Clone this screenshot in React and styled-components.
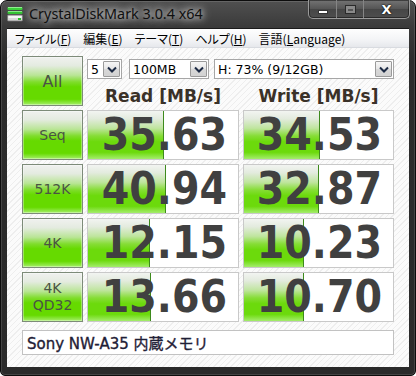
import React from 'react';
import styled, { createGlobalStyle } from 'styled-components';

const Global = createGlobalStyle`
  html, body { margin: 0; padding: 0; background: #ffffff; }
  body { width: 416px; height: 376px; overflow: hidden; }
  * { box-sizing: border-box; }
`;

const Window = styled.div`
  width: 416px;
  height: 376px;
  display: flex;
  flex-direction: column;
  background: linear-gradient(#505050 0px, #3a3a3a 26px, #2c2c2c 60px, #2a2a2a 100%);
  border: 1px solid #0c0c0c;
  border-radius: 7px 7px 5px 5px;
  padding: 0 6px 8px;
  box-shadow: inset 0 0 0 1px rgba(255,255,255,0.12);
`;

const TitleBar = styled.div`
  height: 27px;
  display: flex;
  align-items: flex-start;
`;

const AppIcon = styled.svg`
  margin-top: 5px;
  flex: none;
`;

const Title = styled.div`
  margin-left: 6px;
  margin-top: 4px;
  font-family: "Noto Sans", "Open Sans", sans-serif;
  font-size: 14.4px;
  line-height: 18px;
  color: #101010;
  text-shadow: 0 0 6px rgba(255,255,255,0.85), 0 0 10px rgba(255,255,255,0.6), 0 0 14px rgba(255,255,255,0.4);
  white-space: nowrap;
`;

const Caption = styled.div`
  margin-left: auto;
  margin-right: -1px;
  margin-top: -1px;
  display: flex;
  height: 19px;
  border: 1px solid #9a9a9a;
  border-top: none;
  border-radius: 0 0 5px 5px;
  background: linear-gradient(#747474, #555 50%, #464646 51%, #4e4e4e);
  box-shadow: inset 0 0 0 1px rgba(0,0,0,0.45);
  overflow: hidden;
`;

const CapBtn = styled.div`
  width: ${p => p.$w}px;
  height: 100%;
  display: flex;
  align-items: center;
  justify-content: center;
  border-left: ${p => (p.$first ? 'none' : '1px solid #858585')};
`;

const MinGlyph = styled.div`
  width: 10px;
  height: 4px;
  margin-top: 6px;
  background: #ffffff;
  border: 1px solid #333;
`;

const MaxGlyph = styled.div`
  width: 11px;
  height: 9px;
  border: 1px solid #2a2a2a;
  background: #8a8a8a;
  &::after {
    content: '';
    display: block;
    margin: 3px 2px 0;
    height: 2px;
    background: #555;
  }
`;

const CloseGlyph = styled.div`
  font-family: "DejaVu Sans", sans-serif;
  font-weight: bold;
  font-size: 13px;
  line-height: 13px;
  color: #ffffff;
  text-shadow: 0 0 1px #000, 0 0 2px #000;
`;

const Inner = styled.div`
  flex: 1;
  display: flex;
  flex-direction: column;
  border-top: 1px solid #1a1a1a;
`;

const MenuBar = styled.div`
  height: 19px;
  display: flex;
  align-items: center;
  padding-left: 2px;
  background: linear-gradient(#fefefe, #f3f4f6 60%, #e6e8ec);
  font-family: "Noto Sans CJK JP", "Noto Sans", sans-serif;
  font-feature-settings: "palt";
  font-size: 12px;
  color: #000;
  border-bottom: 1px solid #d8dbe0;
`;

const MenuItem = styled.span`
  padding: 0 6px;
  line-height: 17px;
  white-space: nowrap;
  u { text-decoration: underline; text-underline-offset: 1px; }
`;

const Client = styled.div`
  flex: 1;
  padding: 8px 15px 8px;
  background: repeating-linear-gradient(135deg, #fbfbfb 0px, #fbfbfb 3px, #eeeeee 3px, #eeeeee 4px);
  display: grid;
  grid-template-columns: 61px 152px 151px;
  grid-template-rows: repeat(5, 50px) 29px;
  column-gap: 4px;
  row-gap: 4px;
`;

const GreenButton = styled.div`
  border: 1px solid #7d8b79;
  background: linear-gradient(#f0f1ef 0%, #e4ebe0 18%, #b9e596 38%, #7fdd2c 52%, #66da00 62%, #66da00 88%, #a6ef6c 100%);
  box-shadow: inset 0 0 0 1px rgba(255,255,255,0.35);
  display: flex;
  flex-direction: column;
  align-items: center;
  justify-content: center;
  font-family: "DejaVu Sans", sans-serif;
  font-size: ${p => (p.$big ? 16 : 14)}px;
  line-height: 17px;
  color: #4a5443;
`;

const TopArea = styled.div`
  grid-column: 2 / span 2;
  display: grid;
  grid-template-columns: 152px 151px;
  column-gap: 4px;
  grid-template-rows: 20px auto;
  padding-top: 3px;
`;

const ComboRow = styled.div`
  grid-column: 1 / -1;
  display: flex;
`;

const Combo = styled.div`
  width: ${p => p.$w}px;
  margin-left: ${p => p.$ml || 0}px;
  height: 20px;
  border: 1px solid #a6a6a6;
  background: #ffffff;
  display: flex;
  align-items: center;
  padding: 1px;
  font-family: "DejaVu Sans", sans-serif;
  font-size: 12.5px;
  color: #000;
`;

const ComboText = styled.span`
  flex: 1;
  padding-left: 2px;
  white-space: nowrap;
  overflow: hidden;
`;

const DropBtn = styled.div`
  width: 17px;
  height: 100%;
  border: 1px solid #9a9a9a;
  border-radius: 1px;
  background: linear-gradient(#f6f6f6, #e6e6e6 50%, #d8d8d8 51%, #d2d2d2);
  display: flex;
  align-items: center;
  justify-content: center;
`;

const Header = styled.div`
  margin-top: 7px;
  text-align: center;
  font-family: "DejaVu Sans", sans-serif;
  font-weight: bold;
  font-size: 17px;
  line-height: 20px;
  color: #3a3128;
  white-space: nowrap;
`;

const ResultCell = styled.div`
  border: 1px solid #c9c9c9;
  background: #ffffff;
  display: grid;
  overflow: hidden;
`;

const Bar = styled.div`
  grid-area: 1 / 1;
  justify-self: start;
  height: 100%;
  border-right: 1px solid #3d8a1c;
  background: linear-gradient(#f2f4f1 0%, #e3ebde 16%, #bfe59e 36%, #86dd36 52%, #6cda0c 64%, #6cda0c 86%, #a4ed6c 100%);
`;

const Value = styled.div`
  grid-area: 1 / 1;
  justify-self: end;
  align-self: center;
  z-index: 1;
  padding-right: 11px;
  font-family: "DejaVu Sans Condensed", "DejaVu Sans", sans-serif;
  font-stretch: condensed;
  font-weight: bold;
  font-size: 44px;
  line-height: 44px;
  color: #404040;
  white-space: nowrap;
`;

const Comment = styled.div`
  grid-column: 1 / -1;
  margin-top: 4px;
  border: 1px solid #c2c2c2;
  background: #ffffff;
  display: flex;
  align-items: center;
  padding-left: 4px;
  font-family: "DejaVu Sans", "Noto Sans CJK JP", sans-serif;
  font-size: 15px;
  color: #1f2036;
  -webkit-text-stroke: 0.35px #1f2036;
  white-space: nowrap;
`;

const Chevron = () => (
  <svg width="10" height="7" viewBox="0 0 10 7">
    <path d="M1 1.5 L5 5.5 L9 1.5" fill="none" stroke="#1c2a44" strokeWidth="2" />
  </svg>
);

const Icon = () => (
  <AppIcon width="16" height="16" viewBox="0 0 16 16">
    <rect x="0.5" y="1" width="15" height="3" rx="1" fill="#3ccf3c" />
    <rect x="1" y="1" width="14" height="1" fill="#8ff08f" />
    <rect x="0.5" y="5" width="15" height="3" rx="1" fill="#33c233" />
    <rect x="1" y="5" width="14" height="1" fill="#85e885" />
    <rect x="0.5" y="9" width="15" height="6" rx="1" fill="#d8d8d8" stroke="#777" strokeWidth="0.8" />
    <rect x="1.5" y="10" width="13" height="2" fill="#f6f6f6" />
    <rect x="11" y="12" width="3" height="2" fill="#2fbf2f" />
  </AppIcon>
);

const rows = [
  { label: ['Seq'], read: 35.63, write: 34.53 },
  { label: ['512K'], read: 40.94, write: 32.87 },
  { label: ['4K'], read: 12.15, write: 10.23 },
  { label: ['4K', 'QD32'], read: 13.66, write: 10.70 },
];

const barWidth = v => Math.max(0, Math.round(29.4 + 30 * Math.log10(v)));

const Result = ({ value }) => (
  <ResultCell>
    <Bar style={{ width: `${barWidth(value)}px` }} />
    <Value>{value.toFixed(2)}</Value>
  </ResultCell>
);

export default function App() {
  return (
    <>
      <Global />
      <Window>
        <TitleBar>
          <Icon />
          <Title>CrystalDiskMark 3.0.4 x64</Title>
          <Caption>
            <CapBtn $w={27} $first><MinGlyph /></CapBtn>
            <CapBtn $w={27}><MaxGlyph /></CapBtn>
            <CapBtn $w={46}><CloseGlyph>X</CloseGlyph></CapBtn>
          </Caption>
        </TitleBar>
        <Inner>
          <MenuBar>
            <MenuItem>ファイル(<u>F</u>)</MenuItem>
            <MenuItem>編集(<u>E</u>)</MenuItem>
            <MenuItem>テーマ(<u>T</u>)</MenuItem>
            <MenuItem>ヘルプ(<u>H</u>)</MenuItem>
            <MenuItem>言語(<u>L</u>anguage)</MenuItem>
          </MenuBar>
          <Client>
            <GreenButton $big>All</GreenButton>
            <TopArea>
              <ComboRow>
                <Combo $w={35}><ComboText>5</ComboText><DropBtn><Chevron /></DropBtn></Combo>
                <Combo $w={80} $ml={7}><ComboText>100MB</ComboText><DropBtn><Chevron /></DropBtn></Combo>
                <Combo $w={180} $ml={5}><ComboText>H: 73% (9/12GB)</ComboText><DropBtn><Chevron /></DropBtn></Combo>
              </ComboRow>
              <Header>Read [MB/s]</Header>
              <Header>Write [MB/s]</Header>
            </TopArea>
            {rows.map(r => (
              <React.Fragment key={r.label.join()}>
                <GreenButton>{r.label.map(l => <span key={l}>{l}</span>)}</GreenButton>
                <Result value={r.read} />
                <Result value={r.write} />
              </React.Fragment>
            ))}
            <Comment>Sony NW-A35 内蔵メモリ</Comment>
          </Client>
        </Inner>
      </Window>
    </>
  );
}
